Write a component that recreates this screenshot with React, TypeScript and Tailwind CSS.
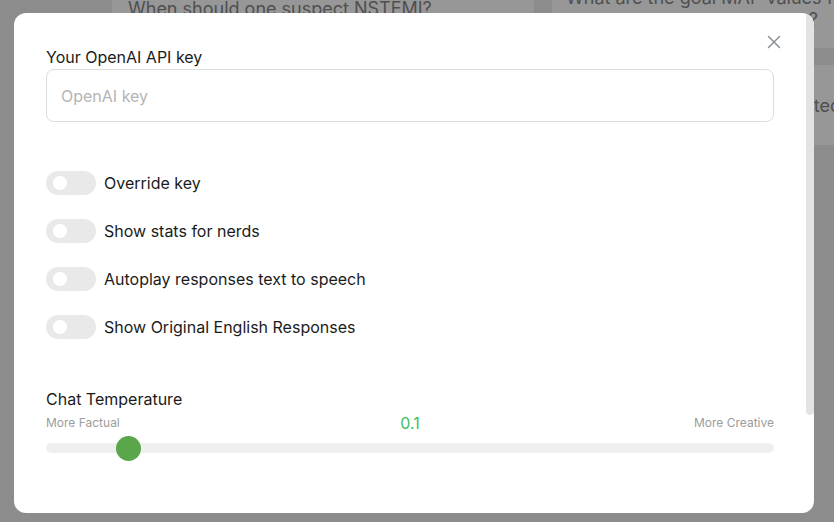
import React, { useState } from "react";

const toggles = [
  "Override key",
  "Show stats for nerds",
  "Autoplay responses text to speech",
  "Show Original English Responses",
];

const Toggle = ({ label }: { label: string }) => {
  const [on, setOn] = useState(false);
  return (
    <label className="flex items-center gap-2 h-6 cursor-pointer">
      <button
        type="button"
        onClick={() => setOn(!on)}
        className={`relative h-6 w-[50px] rounded-full ${on ? "bg-[#5aa64b]" : "bg-[#e9e9e9]"}`}
      >
        <span
          className={`absolute top-[5px] h-[14px] w-[14px] rounded-full bg-white ${on ? "left-[30px]" : "left-[7px]"}`}
        />
      </button>
      <span className="text-base text-[#1b1b1b]">{label}</span>
    </label>
  );
};

const App = () => {
  return (
    <div className="relative h-[522px] w-[834px] overflow-hidden bg-[#8c8c8c] font-['Inter',sans-serif]">
      {/* page behind the overlay */}
      <div className="flex h-full items-start">
        <div className="w-[112px] shrink-0" />
        <div className="h-[48px] w-[422px] shrink-0 bg-[#979797] px-4">
          <div className="mt-[-5px] whitespace-nowrap text-[18px] text-[#4f4f4f]">When should one suspect NSTEMI?</div>
        </div>
        <div className="ml-[18px] flex min-w-0 flex-1 flex-col bg-[#8c8c8c]">
          <div className="h-[48px] bg-[#979797] px-[14px] text-[18px] leading-[22px] text-[#4f4f4f]">
            <div className="mt-[-13px] whitespace-nowrap">What are the goal MAP values for patients</div>
            <div className="pr-[2px] text-right">?</div>
          </div>
          <div className="h-[17px]" />
          <div className="flex h-[80px] items-center justify-end overflow-hidden bg-[#979797] text-[18px] text-[#4f4f4f]">
            <span className="mr-[-7px] whitespace-nowrap">ted</span>
          </div>
        </div>
      </div>

      {/* modal */}
      <div className="absolute left-[14px] top-[13px] flex h-[500px] w-[800px] overflow-hidden rounded-[12px] bg-white">
        <div className="relative flex-1 px-8 pt-8">
          <button type="button" className="absolute right-[21px] top-[18px] p-1 text-[#8b9297]">
            <svg width="14" height="14" viewBox="0 0 14 14" fill="none" stroke="currentColor" strokeWidth="1.5" strokeLinecap="round">
              <path d="M1.5 1.5L12.5 12.5M12.5 1.5L1.5 12.5" />
            </svg>
          </button>

          <div className="text-base leading-6 text-[#1b1b1b]">Your OpenAI API key</div>
          <input
            placeholder="OpenAI key"
            className="h-[53px] w-full rounded-lg border border-[#dcdcdc] px-[14px] text-base text-[#1b1b1b] outline-none placeholder:text-[#b4b4b4]"
          />

          <div className="mt-[49px] flex flex-col gap-6">
            {toggles.map((t) => (
              <Toggle key={t} label={t} />
            ))}
          </div>

          <div className="mt-[48px] text-base leading-6 text-[#1b1b1b]">Chat Temperature</div>
          <div className="flex h-6 items-center justify-between">
            <span className="w-[120px] text-xs text-[#9c9c9c]">More Factual</span>
            <span className="text-base text-[#40c057]">0.1</span>
            <span className="w-[120px] text-right text-xs text-[#9c9c9c]">More Creative</span>
          </div>
          <div className="relative mt-[8px] h-[10px] w-full rounded-full bg-[#efefef]">
            <div className="absolute left-[69.5px] top-[-7.5px] h-[25px] w-[25px] rounded-full bg-[#5aa64b]" />
          </div>
        </div>
        <div className="w-[8px]">
          <div className="h-[402px] rounded-b-full bg-[#e3e3e3]" />
        </div>
      </div>
    </div>
  );
};

export default App;
